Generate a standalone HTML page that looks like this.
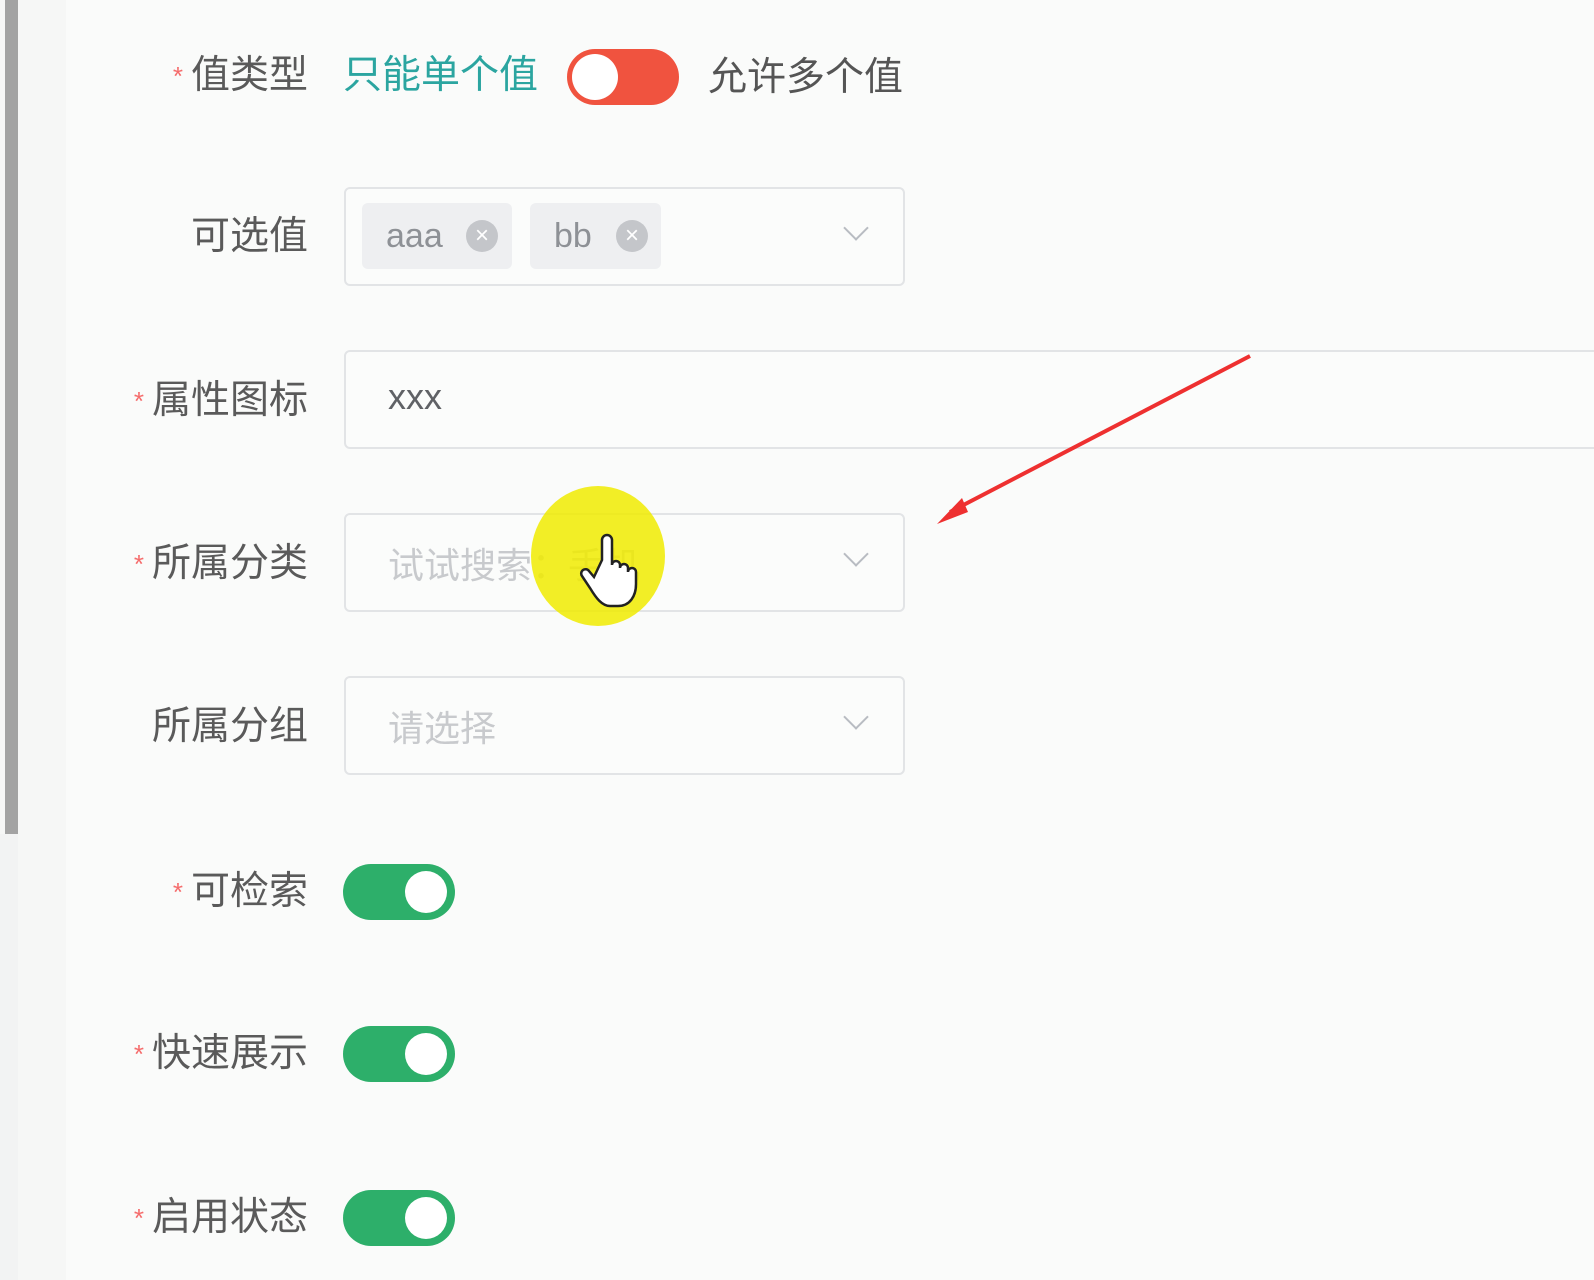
<!DOCTYPE html>
<html><head><meta charset="utf-8"><style>
body{margin:0;width:1594px;height:1280px;background:#fafbfa;position:relative;overflow:hidden;font-family:"Liberation Sans","Noto Sans CJK SC",sans-serif;}
.a{position:absolute}
.lbl{position:absolute;right:1286px;font-size:39px;color:#5a5a5a;line-height:42px;white-space:nowrap}
.lbl i{color:#f56c6c;font-style:normal;font-size:26px;vertical-align:top;margin-right:8px}
.box{position:absolute;border:2px solid #e2e4e6;border-radius:6px;background:#fbfcfb;box-sizing:border-box}
.chev{position:absolute;right:38px;top:30px;width:16px;height:16px;border-right:2px solid #b8bcc2;border-bottom:2px solid #b8bcc2;transform:rotate(45deg)}
.ph{position:absolute;left:42px;top:22px;font-size:36px;color:#c8cacd}
.sw{position:absolute;width:112px;height:56px;border-radius:28px;background:#2daf6a}
.sw::after{content:"";position:absolute;right:8px;top:7px;width:42px;height:42px;border-radius:50%;background:#fff}
.tag{position:absolute;top:14px;height:66px;background:#eeeff1;border-radius:6px;font-size:34px;color:#8e9196;line-height:66px;padding-left:24px;box-sizing:border-box}
.x{position:absolute;top:17px;width:32px;height:32px;border-radius:50%;background:#c4c6ca;color:#fff;font-size:24px;line-height:32px;text-align:center}
</style></head><body>
<div class="a" style="left:0;top:0;width:66px;height:1280px;background:#f6f7f6"></div>
<div class="a" style="left:0;top:834px;width:18px;height:446px;background:#f2f3f3"></div>
<div class="a" style="left:5px;top:0;width:13px;height:834px;background:#a3a3a3"></div>

<div class="lbl" style="top:55px"><i>*</i>值类型</div>
<div class="a" style="left:343px;top:55px;font-size:39px;color:#2ba5a0;line-height:42px">只能单个值</div>
<div class="a" style="left:567px;top:49px;width:112px;height:56px;border-radius:28px;background:#f0533f"><div class="a" style="left:5px;top:5px;width:46px;height:46px;border-radius:50%;background:#fff"></div></div>
<div class="a" style="left:708px;top:57px;font-size:39px;color:#555;line-height:42px">允许多个值</div>

<div class="lbl" style="top:216px">可选值</div>
<div class="box" style="left:344px;top:187px;width:561px;height:99px">
 <div class="tag" style="left:16px;width:150px">aaa<div class="x" style="left:104px">×</div></div>
 <div class="tag" style="left:184px;width:131px">bb<div class="x" style="left:86px">×</div></div>
 <div class="chev"></div>
</div>

<div class="lbl" style="top:380px"><i>*</i>属性图标</div>
<div class="box" style="left:344px;top:350px;width:1300px;height:99px"><div class="a" style="left:42px;top:24px;font-size:36px;color:#606266">xxx</div></div>

<div class="lbl" style="top:543px"><i>*</i>所属分类</div>
<div class="box" style="left:344px;top:513px;width:561px;height:99px"><div class="ph">试试搜索：手机</div><div class="chev"></div></div>

<div class="lbl" style="top:706px">所属分组</div>
<div class="box" style="left:344px;top:676px;width:561px;height:99px"><div class="ph">请选择</div><div class="chev"></div></div>

<div class="lbl" style="top:871px"><i>*</i>可检索</div>
<div class="sw" style="left:343px;top:864px"></div>
<div class="lbl" style="top:1033px"><i>*</i>快速展示</div>
<div class="sw" style="left:343px;top:1026px"></div>
<div class="lbl" style="top:1197px"><i>*</i>启用状态</div>
<div class="sw" style="left:343px;top:1190px"></div>

<div class="a" style="left:531px;top:486px;width:134px;height:140px;border-radius:50%;background:rgba(240,235,0,0.85)"></div>
<svg class="a" style="left:0;top:0" width="1594" height="1280">
<path d="M1250 356 L950 512" stroke="#ee3030" stroke-width="4" fill="none"/>
<path d="M937 524 L962 498 L968 512 Z" fill="#ee3030"/>
<path d="M602 560 v-20 a5 5 0 0 1 10 0 v25 a4 4 0 0 1 8 0 v3 a4 4 0 0 1 8 0 v4 a4 4 0 0 1 8 0 v12 c0 12 -6 22 -18 22 h-8 c-8 0 -14 -8 -20 -18 l-8 -12 a4 4 0 0 1 7 -5 l5 6 z" fill="#fff" stroke="#222" stroke-width="2.5"/>
</svg>
</body></html>
